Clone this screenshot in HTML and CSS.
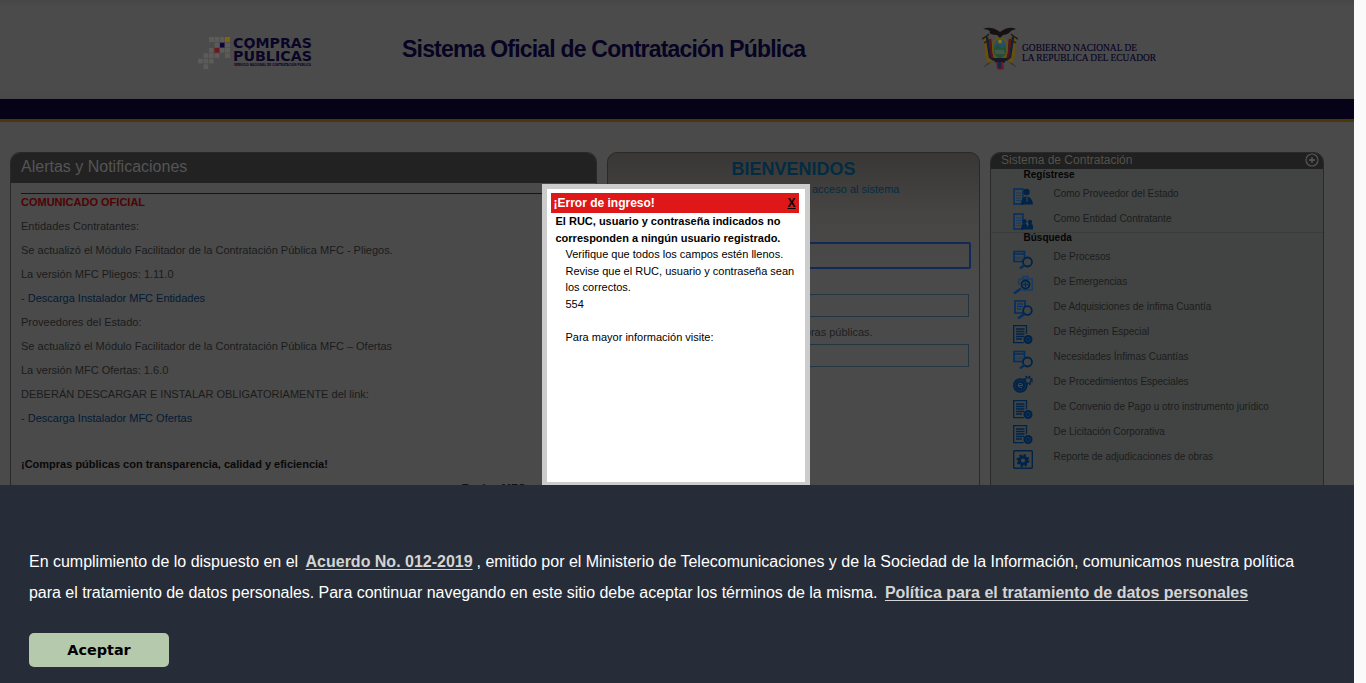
FILE: index.html
```html
<!DOCTYPE html>
<html lang="es">
<head>
<meta charset="utf-8">
<title>Sistema Oficial de Contratación Pública</title>
<link rel="stylesheet" href="styles.css">
</head>
<body>
<svg class="defs" width="0" height="0" aria-hidden="true">
  <symbol id="sheet" viewBox="0 0 20 19"><path d="M1 1h9v15H1z" fill="none" stroke="#012f62" stroke-width="1.500"/><path d="M3 5h6M3 7.500h6M3 10h5M3 12.500h5" stroke="#183b62" stroke-width="1.200"/></symbol>
  <symbol id="person" viewBox="0 0 20 19"><use href="#sheet" width="20" height="19"/><circle cx="13.500" cy="4" r="3.200" fill="#012347"/><path d="M8 16.500q0-8 5.500-8t6.500 8z" fill="#012347"/><path d="M14 9v5" stroke="#444746"/></symbol>
  <symbol id="people" viewBox="0 0 20 19"><use href="#sheet" width="20" height="19"/><g fill="#012347"><circle cx="11.500" cy="8.500" r="2.200"/><circle cx="17" cy="9" r="2.200"/><path d="M8 16.500q0-6 3.500-6t3 6q0-6 3-6t2.500 6z"/></g></symbol>
  <symbol id="search" viewBox="0 0 20 19"><path d="M1 1.500h10.500v10H1zM1 4h10" fill="none" stroke="#012f62" stroke-width="1.700"/><path d="M3 9.500v-3M5 9.500v-3M7 9.500v-3M9 9.500v-3" stroke="#183b62" stroke-width="1.200"/><circle cx="14.500" cy="12" r="4.500" fill="#414443" stroke="#012347" stroke-width="1.800"/><path d="M11.500 15l-4.500 3.500" stroke="#012f62" stroke-width="2.300"/></symbol>
  <symbol id="buy" viewBox="0 0 20 19"><path d="M2 1h10v12H2z" fill="none" stroke="#012f62" stroke-width="1.700"/><path d="M4 4h6M4 6.500h6M4 9h4" stroke="#012f62" stroke-width="1.200"/><circle cx="14.500" cy="10.500" r="4.300" fill="#414443" stroke="#012347" stroke-width="1.800"/><path d="M11.500 14L5 18.500" stroke="#012f62" stroke-width="2.300"/></symbol>
  <symbol id="aid" viewBox="0 0 20 19"><path d="M6 4h13.300v11H9M6 4v6M10 3.500V1.500h5v2" fill="none" stroke="#183b62" stroke-width="1.500"/><circle cx="12.500" cy="9.500" r="4" fill="none" stroke="#012347" stroke-width="1.800"/><path d="M12.500 7v5M10 9.500h5" stroke="#012f62" stroke-width="1.500"/><path d="M8 13.500l-7 5" stroke="#012f62" stroke-width="2.200"/></symbol>
  <symbol id="seal" viewBox="0 0 20 19"><path d="M13.500 9V.7H.7v17h10M3 4h8.500M3 6.500h8.500M3 9h8.500M3 11.500h8M3 14h6" fill="none" stroke="#012347" stroke-width="1.300"/><circle cx="15" cy="14.500" r="4.500" fill="#012347"/><circle cx="15" cy="14.500" r="2" fill="none" stroke="#1a3553"/></symbol>
  <symbol id="special" viewBox="0 0 20 19"><circle cx="15" cy="5.500" r="3.800" fill="none" stroke="#012347" stroke-width="2.200" stroke-dasharray="1.700 1.300"/><circle cx="15" cy="5.500" r="2.800" fill="none" stroke="#012347"/><circle cx="7.300" cy="10.500" r="7.300" fill="#012347"/><circle cx="7.300" cy="10.500" r="5.300" fill="none" stroke="#1a3553" stroke-width=".7"/><path d="M5 10.500h4.500q0-2.300-2.200-2.300T5 10.500q0 2.500 4 2" fill="none" stroke="#444746"/></symbol>
  <symbol id="gear" viewBox="0 0 20 19"><rect x=".7" y=".7" width="18.600" height="17.600" rx="1" fill="none" stroke="#012347" stroke-width="1.400"/><circle cx="10" cy="10.500" r="5.500" fill="none" stroke="#012347" stroke-width="2" stroke-dasharray="2.200 2.120"/><circle cx="10" cy="10.500" r="3.600" fill="none" stroke="#012347" stroke-width="3"/></symbol>
</svg>
<div class="page">
  <header class="header">
    <div class="brand">
      <svg class="arrow" viewBox="0 0 32 32"><g fill="#5c5b59"><path d="M11 0h5v5h-5zM16.500 0h4.700v5h-4.700zM22 0h4.500v5H22zM16.500 5.800h4.700v4.700h-4.700zM27 5.800h5v4.700h-5zM11 11h4.500v4.700H11zM22 11h4.500v4.700H22zM27 11h5v4.700h-5zM5.500 16.300h4.700V21H5.500zM11 16.300h4.700V21H11zM16.500 16.300h4.700V21h-4.700zM27 16.300h5V21h-5zM0 21.800h4.800v4.800H0zM5.500 21.800h4.700v4.800H5.500zM11 21.800h4.700v4.800H11zM5.500 27.300h4.700V32H5.500z"/></g><path fill="#80640a" d="M27 0h5v5h-5z"/><path fill="#090439" d="M22 5.800h4.500v4.700H22z"/><path fill="#70171b" d="M16.500 11h4.700v4.700h-4.700z"/></svg>
      <svg class="brand-name" viewBox="0 0 80 38"><g font-family="DejaVu Sans" font-weight="bold" fill="#0a0526"><text x="0" y="13.500" font-size="14" textLength="79" lengthAdjust="spacingAndGlyphs">COMPRAS</text><text x="0" y="26.500" font-size="14" textLength="79" lengthAdjust="spacingAndGlyphs">PÚBLICAS</text><text x="1" y="31.500" font-size="4" textLength="77" lengthAdjust="spacingAndGlyphs">SERVICIO NACIONAL DE CONTRATACIÓN PÚBLICA</text></g></svg>
    </div>
    <h1 class="title">Sistema Oficial de Contratación Pública</h1>
    <div class="government">
      <svg class="crest" viewBox="0 0 36 43"><path d="M2 40L14 28M34 40L22 28M5 38L15 30M31 38L21 30" stroke="#343230"/><path d="M2 9l5 1 6 8-2 16-5 2-3-7zM34 9l-5 1-6 8 2 16 5 2 3-7z" fill="#66500a"/><path d="M5 10l3 20 4 3M31 10l-3 20-4 3" fill="none" stroke="#111d42" stroke-width="2.500"/><path d="M8 12l2 18M28 12l-2 18" stroke="#541519" stroke-width="2.500"/><path d="M0 12l5-3 2-2M36 12l-5-3-2-2M2 16l3-2M34 16l-3-2" stroke="#211b17" stroke-width="1.500"/><ellipse cx="18" cy="22" rx="8" ry="12" fill="#6b530d"/><ellipse cx="18" cy="21.500" rx="6.500" ry="10" fill="#235163"/><path d="M12 21l4-4 3 4 5-1v7l-6 5-6-5z" fill="#264e37"/><circle cx="18" cy="14.500" r="2" fill="#84701e"/><path d="M13 26h10M13 24h9" stroke="#56645f"/><path d="M1 2Q8 -1 15 3l3 2 3-2q7-4 13-1-5 1-7 4-3 2-6 2l-3 3-3-3Q6 8 8 4 5 2 1 2z" fill="#171210"/><path d="M10 31h16l-4 5h-8z" fill="#171a20"/><path d="M14 35h4v8l-3-1zM18 35h3l1 7-4 1z" fill="#611d29"/><path d="M16 35h3v6h-3z" fill="#172645"/></svg>
      <svg class="gov-name" viewBox="0 0 140 28"><g font-family="Liberation Serif" font-size="10.800" fill="#070322" stroke="#070322" stroke-width=".15"><text x="0" y="9" textLength="115" lengthAdjust="spacingAndGlyphs">GOBIERNO NACIONAL DE</text><text x="0" y="19.200" textLength="134" lengthAdjust="spacingAndGlyphs">LA REPUBLICA DEL ECUADOR</text></g></svg>
    </div>
  </header>
  <div class="stripe"></div>
  <main class="columns">
    <section class="panel alerts">
      <h2>Alertas y Notificaciones</h2>
      <div class="alerts-body">
        <p class="notice">COMUNICADO OFICIAL</p>
        <p>Entidades Contratantes:</p>
        <p>Se actualizó el Módulo Facilitador de la Contratación Pública MFC - Pliegos.</p>
        <p>La versión MFC Pliegos: 1.11.0</p>
        <p class="link">- Descarga Instalador MFC Entidades</p>
        <p>Proveedores del Estado:</p>
        <p>Se actualizó el Módulo Facilitador de la Contratación Pública MFC – Ofertas</p>
        <p>La versión MFC Ofertas: 1.6.0</p>
        <p>DEBERÁN DESCARGAR E INSTALAR OBLIGATORIAMENTE del link:</p>
        <p class="link">- Descarga Instalador MFC Ofertas</p>
        <p class="slogan">¡Compras públicas con transparencia, calidad y eficiencia!</p>
        <p class="team">Equipo MFC</p>
      </div>
    </section>
    <section class="panel welcome">
      <h2>BIENVENIDOS</h2>
      <p class="access">acceso al sistema</p>
      <div class="field focused"></div>
      <div class="field user"></div>
      <p class="hint">compras públicas.</p>
      <div class="field"></div>
    </section>
    <section class="panel system">
      <h2>Sistema de Contratación<svg class="plus" viewBox="0 0 14 14"><circle cx="7" cy="7" r="6" fill="none" stroke="#575757" stroke-width="1.200"/><path d="M7 4v6M4 7h6" stroke="#5c5c5c" stroke-width="1.300"/></svg></h2>
      <h3>Regístrese</h3>
      <ul class="register">
        <li><svg><use href="#person"/></svg>Como Proveedor del Estado</li>
        <li><svg><use href="#people"/></svg>Como Entidad Contratante</li>
      </ul>
      <h3 class="find">Búsqueda</h3>
      <ul>
        <li><svg><use href="#search"/></svg>De Procesos</li>
        <li><svg><use href="#aid"/></svg>De Emergencias</li>
        <li><svg><use href="#buy"/></svg>De Adquisiciones de ínfima Cuantía</li>
        <li><svg><use href="#seal"/></svg>De Régimen Especial</li>
        <li><svg><use href="#search"/></svg>Necesidades Ínfimas Cuantías</li>
        <li><svg><use href="#special"/></svg>De Procedimientos Especiales</li>
        <li><svg><use href="#seal"/></svg>De Convenio de Pago u otro instrumento jurídico</li>
        <li><svg><use href="#seal"/></svg>De Licitación Corporativa</li>
        <li><svg><use href="#gear"/></svg>Reporte de adjudicaciones de obras</li>
      </ul>
    </section>
  </main>
</div>
<div class="dialog">
  <div class="dialog-title"><span>¡Error de ingreso!</span><a>X</a></div>
  <div class="dialog-body">
    <strong>El RUC, usuario y contraseña indicados no corresponden a ningún usuario registrado.</strong>
    <div class="details">Verifique que todos los campos estén llenos.<br>Revise que el RUC, usuario y contraseña sean los correctos.<br>554<br><br>Para mayor información visite:</div>
  </div>
</div>
<div class="cookies">
  <p>En cumplimiento de lo dispuesto en el <a class="agreement">Acuerdo No. 012-2019</a>, emitido por el Ministerio de Telecomunicaciones y de la Sociedad de la Información, comunicamos nuestra política<br><span class="continue">para el tratamiento de datos personales. Para continuar navegando en este sitio debe aceptar los términos de la misma. </span><a>Política para el tratamiento de datos personales</a></p>
  <button>Aceptar</button>
</div>
</body>
</html>
```

FILE: styles.css
```css
* { box-sizing: border-box; }
body { margin: 0; height: 683px; overflow: hidden; background: #fafafa; font-family: "Liberation Sans", Arial, sans-serif; }
h1, h2, h3, p, ul { margin: 0; padding: 0; }
.defs { position: absolute; }
.page { width: 1354px; height: 683px; overflow: hidden; background: #4a4a4a; }
.header { height: 99px; display: flex; align-items: flex-start; padding-left: 198px; background: linear-gradient(#464646, #4b4b4b 6px, #4b4b4b 88px, #494949); }
.brand { width: 204px; display: flex; gap: 3px; padding-top: 34px; }
.arrow { width: 32px; height: 32px; margin-top: 3px; }
.brand-name { width: 80px; height: 38px; }
.title { width: 580px; padding-top: 34px; font-size: 23px; line-height: 30px; letter-spacing: -.8px; color: #070322; white-space: nowrap; }
.government { display: flex; padding-top: 27px; gap: 4px; }
.crest { width: 36px; height: 43px; }
.gov-name { width: 140px; height: 28px; margin-top: 15px; }
.stripe { height: 23px; background: #060217; border-bottom: 3px solid #4b3709; }
.columns { display: grid; grid-template-columns: 587px 373px 334px; gap: 10px; padding: 30px 10px 0; height: 561px; }
.panel { border: 1px solid #292929; border-radius: 10px 10px 0 0; overflow: hidden; }
.alerts h2 { height: 30px; padding-left: 10px; background: #222; font: 400 16px/28px "Liberation Sans", sans-serif; color: #555; }
.alerts-body { margin: 10px 10px 0; border-top: 1px solid #111614; font-size: 11px; line-height: 16px; color: #1b1b1b; }
.alerts p { margin-bottom: 8px; }
.alerts .notice { color: #500205; font-weight: bold; }
.alerts .link { color: #031a35; }
.alerts .slogan { margin-top: 30px; color: #080808; font-weight: bold; }
.alerts .team { margin: 8px 0 0; padding-left: 440.500px; color: #111; font-weight: bold; }
.welcome { background: linear-gradient(#393735, #464544 60px, #4a4a4a 120px); padding: 0 8px; }
.welcome h2 { height: 32px; text-align: center; font-size: 18px; line-height: 32px; color: #032c42; }
.access { height: 57px; padding-left: 196px; font-size: 11px; line-height: 9px; color: #032c42; }
.field { height: 23px; border: 1px solid #233540; margin: 0 2px; }
.field.focused { height: 27px; margin: 0 0 25px; border: 2px solid #102a55; border-radius: 2px; }
.field.user { margin-bottom: 6px; }
.hint { height: 21px; padding-left: 168px; color: #1e1e1e; font-size: 11px; line-height: 19px; }
.system { background: #414443; }
.system h2 { display: flex; justify-content: space-between; height: 16px; padding: 0 4px 0 10px; background: #202020; color: #53534a; font-size: 12px; line-height: 14px; font-weight: 400; }
.plus { width: 14px; height: 14px; }
.system h3 { height: 12px; padding-left: 32.500px; font-size: 10px; line-height: 11px; color: #050505; }
.system .find { height: 13px; border-top: 1px solid #393c3b; line-height: 9px; }
.system ul { list-style: none; }
.system li { display: flex; height: 25px; padding: 5px 0 0 22px; gap: 20.500px; font-size: 10px; line-height: 14px; letter-spacing: -.02px; color: #1c1c1c; white-space: nowrap; }
.system li svg { flex: none; width: 20px; height: 19px; }
.system .register { height: 51px; }
.register li { padding-top: 6px; }
.system .register svg { margin-top: 1px; }
.dialog { position: absolute; left: 542px; top: 184px; width: 268px; height: 303px; border: 5px solid #ccc; background: #fff; padding: 4px; color: #000; }
.dialog-title { width: 248px; height: 20px; display: flex; justify-content: space-between; padding: 0 3.500px 0 2.500px; background: #e01719; color: #fff; font-size: 12px; line-height: 20px; font-weight: bold; }
.dialog-title a { color: #000; text-decoration: underline; }
.dialog-body { padding: 0 0 0 4.500px; font-size: 11px; line-height: 16.600px; }
.dialog-body strong { display: block; width: 240px; }
.details { padding-left: 10px; width: 245px; }
.cookies { position: absolute; left: 0; top: 485px; width: 1354px; height: 198px; padding: 61px 29px 0; background: #272d38; color: #fff; }
.cookies p { font-size: 16px; line-height: 31px; letter-spacing: -.01px; height: 87px; white-space: nowrap; }
.cookies .continue { letter-spacing: -.03px; }
.cookies a { margin-left: 3px; color: #d4d4d4; font-weight: bold; text-decoration: underline 1px; text-underline-offset: 2px; text-decoration-skip-ink: none; }
.cookies .agreement { margin-right: 4px; }
.cookies button { display: block; width: 140px; height: 34px; border: 0; border-radius: 5px; background: #b5c9ad; color: #000; font: bold 14.400px "DejaVu Sans", sans-serif; }
```
